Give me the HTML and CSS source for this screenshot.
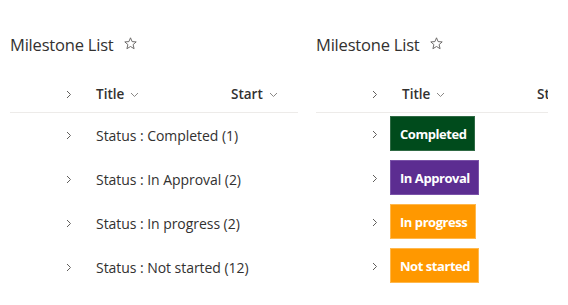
FILE: index.html
```html
<!DOCTYPE html>
<html lang="en">
<head>
  <meta charset="UTF-8">
  <title>Milestone List</title>
  <link rel="stylesheet" href="styles.css">
</head>
<body>
  <div class="page">
    <!-- grouped view -->
    <div class="panel panel-left">
      <h2 class="list-title">Milestone List
        <svg class="star" width="13" height="13" viewBox="0 0 13 13"><path d="M6.5 0.8 L8.1 4.6 L12.2 4.9 L9.1 7.6 L10.1 11.7 L6.5 9.5 L2.9 11.7 L3.9 7.6 L0.8 4.9 L4.9 4.6 Z" fill="none" stroke="#605e5c" stroke-width="0.9" stroke-linejoin="round"/></svg>
      </h2>
      <div class="head-row">
        <span class="expand"><svg width="6" height="9" viewBox="0 0 6 9"><path d="M1 1 L4.5 4.5 L1 8" fill="none" stroke="#605e5c" stroke-width="1"/></svg></span>
        <span class="col col-title">Title <svg class="down" width="9" height="6" viewBox="0 0 9 6"><path d="M1 1 L4.5 4.5 L8 1" fill="none" stroke="#8a8886" stroke-width="1"/></svg></span>
        <span class="col col-start">Start <svg class="down" width="9" height="6" viewBox="0 0 9 6"><path d="M1 1 L4.5 4.5 L8 1" fill="none" stroke="#8a8886" stroke-width="1"/></svg></span>
      </div>
      <div class="group-row">
        <span class="expand"><svg width="6" height="9" viewBox="0 0 6 9"><path d="M1 1 L4.5 4.5 L1 8" fill="none" stroke="#605e5c" stroke-width="1"/></svg></span>
        <span class="group-name">Status : Completed (1)</span>
      </div>
      <div class="group-row">
        <span class="expand"><svg width="6" height="9" viewBox="0 0 6 9"><path d="M1 1 L4.5 4.5 L1 8" fill="none" stroke="#605e5c" stroke-width="1"/></svg></span>
        <span class="group-name">Status : In Approval (2)</span>
      </div>
      <div class="group-row">
        <span class="expand"><svg width="6" height="9" viewBox="0 0 6 9"><path d="M1 1 L4.5 4.5 L1 8" fill="none" stroke="#605e5c" stroke-width="1"/></svg></span>
        <span class="group-name">Status : In progress (2)</span>
      </div>
      <div class="group-row">
        <span class="expand"><svg width="6" height="9" viewBox="0 0 6 9"><path d="M1 1 L4.5 4.5 L1 8" fill="none" stroke="#605e5c" stroke-width="1"/></svg></span>
        <span class="group-name">Status : Not started (12)</span>
      </div>
    </div>

    <!-- formatted view -->
    <div class="panel panel-right">
      <h2 class="list-title">Milestone List
        <svg class="star" width="13" height="13" viewBox="0 0 13 13"><path d="M6.5 0.8 L8.1 4.6 L12.2 4.9 L9.1 7.6 L10.1 11.7 L6.5 9.5 L2.9 11.7 L3.9 7.6 L0.8 4.9 L4.9 4.6 Z" fill="none" stroke="#605e5c" stroke-width="0.9" stroke-linejoin="round"/></svg>
      </h2>
      <div class="head-row">
        <span class="expand"><svg width="6" height="9" viewBox="0 0 6 9"><path d="M1 1 L4.5 4.5 L1 8" fill="none" stroke="#605e5c" stroke-width="1"/></svg></span>
        <span class="col col-title">Title <svg class="down" width="9" height="6" viewBox="0 0 9 6"><path d="M1 1 L4.5 4.5 L8 1" fill="none" stroke="#8a8886" stroke-width="1"/></svg></span>
        <span class="col col-start">Start <svg class="down" width="9" height="6" viewBox="0 0 9 6"><path d="M1 1 L4.5 4.5 L8 1" fill="none" stroke="#8a8886" stroke-width="1"/></svg></span>
      </div>
      <div class="group-row">
        <span class="expand"><svg width="6" height="9" viewBox="0 0 6 9"><path d="M1 1 L4.5 4.5 L1 8" fill="none" stroke="#605e5c" stroke-width="1"/></svg></span>
        <span class="badge badge-done">Completed</span>
      </div>
      <div class="group-row">
        <span class="expand"><svg width="6" height="9" viewBox="0 0 6 9"><path d="M1 1 L4.5 4.5 L1 8" fill="none" stroke="#605e5c" stroke-width="1"/></svg></span>
        <span class="badge badge-approval">In Approval</span>
      </div>
      <div class="group-row">
        <span class="expand"><svg width="6" height="9" viewBox="0 0 6 9"><path d="M1 1 L4.5 4.5 L1 8" fill="none" stroke="#605e5c" stroke-width="1"/></svg></span>
        <span class="badge badge-orange">In progress</span>
      </div>
      <div class="group-row">
        <span class="expand"><svg width="6" height="9" viewBox="0 0 6 9"><path d="M1 1 L4.5 4.5 L1 8" fill="none" stroke="#605e5c" stroke-width="1"/></svg></span>
        <span class="badge badge-orange">Not started</span>
      </div>
    </div>
  </div>
</body>
</html>
```
FILE: styles.css
```css
body {
  margin: 0;
  font-family: "Open Sans", "Noto Sans", sans-serif;
  color: #323130;
  background: #ffffff;
  overflow: hidden;
}

.page {
  display: flex;
  padding-left: 10px;
}

.panel {
  flex: none;
}

.panel-left {
  width: 288px;
}

.panel-right {
  width: 232px;
  margin-left: 18px;
  overflow: hidden;
}

.list-title {
  display: flex;
  align-items: center;
  margin: 0;
  padding-top: 31px;
  height: 26px;
  font-size: 16.5px;
  font-weight: 400;
  letter-spacing: -0.2px;
  white-space: nowrap;
}

.star {
  margin-left: 10px;
  margin-top: -1px;
}

.head-row {
  display: flex;
  align-items: center;
  height: 36px;
  margin-top: 19px;
  border-bottom: 1px solid #edebe9;
  font-size: 13.5px;
  font-weight: 600;
  white-space: nowrap;
}

.expand {
  display: flex;
  flex: none;
  width: 30px;
  margin-left: 56px;
}

.col {
  display: flex;
  flex: none;
  align-items: center;
  gap: 6px;
}

.col-title {
  width: 135px;
}

.down {
  margin-top: 1px;
}

.group-row {
  display: flex;
  align-items: center;
  height: 44px;
  font-size: 14px;
  white-space: nowrap;
}

.group-name {
  letter-spacing: -0.05px;
}

.panel-right .group-row {
  align-items: flex-start;
  padding-top: 3px;
  height: 41px;
}

.panel-right .group-row .expand {
  width: 18px;
  margin-top: 14px;
}

.badge {
  display: flex;
  align-items: center;
  height: 33px;
  padding: 0 8px 0 9px;
  border: 1px solid;
  color: #ffffff;
  font-size: 13px;
  font-weight: 700;
  letter-spacing: -0.45px;
}

.badge-done {
  background: #004b1c;
  border-color: #2f6a44;
}

.badge-approval {
  background: #5c2d91;
  border-color: #7a52a8;
}

.badge-orange {
  background: #ff9800;
  border-color: #ffb84d;
}
```
